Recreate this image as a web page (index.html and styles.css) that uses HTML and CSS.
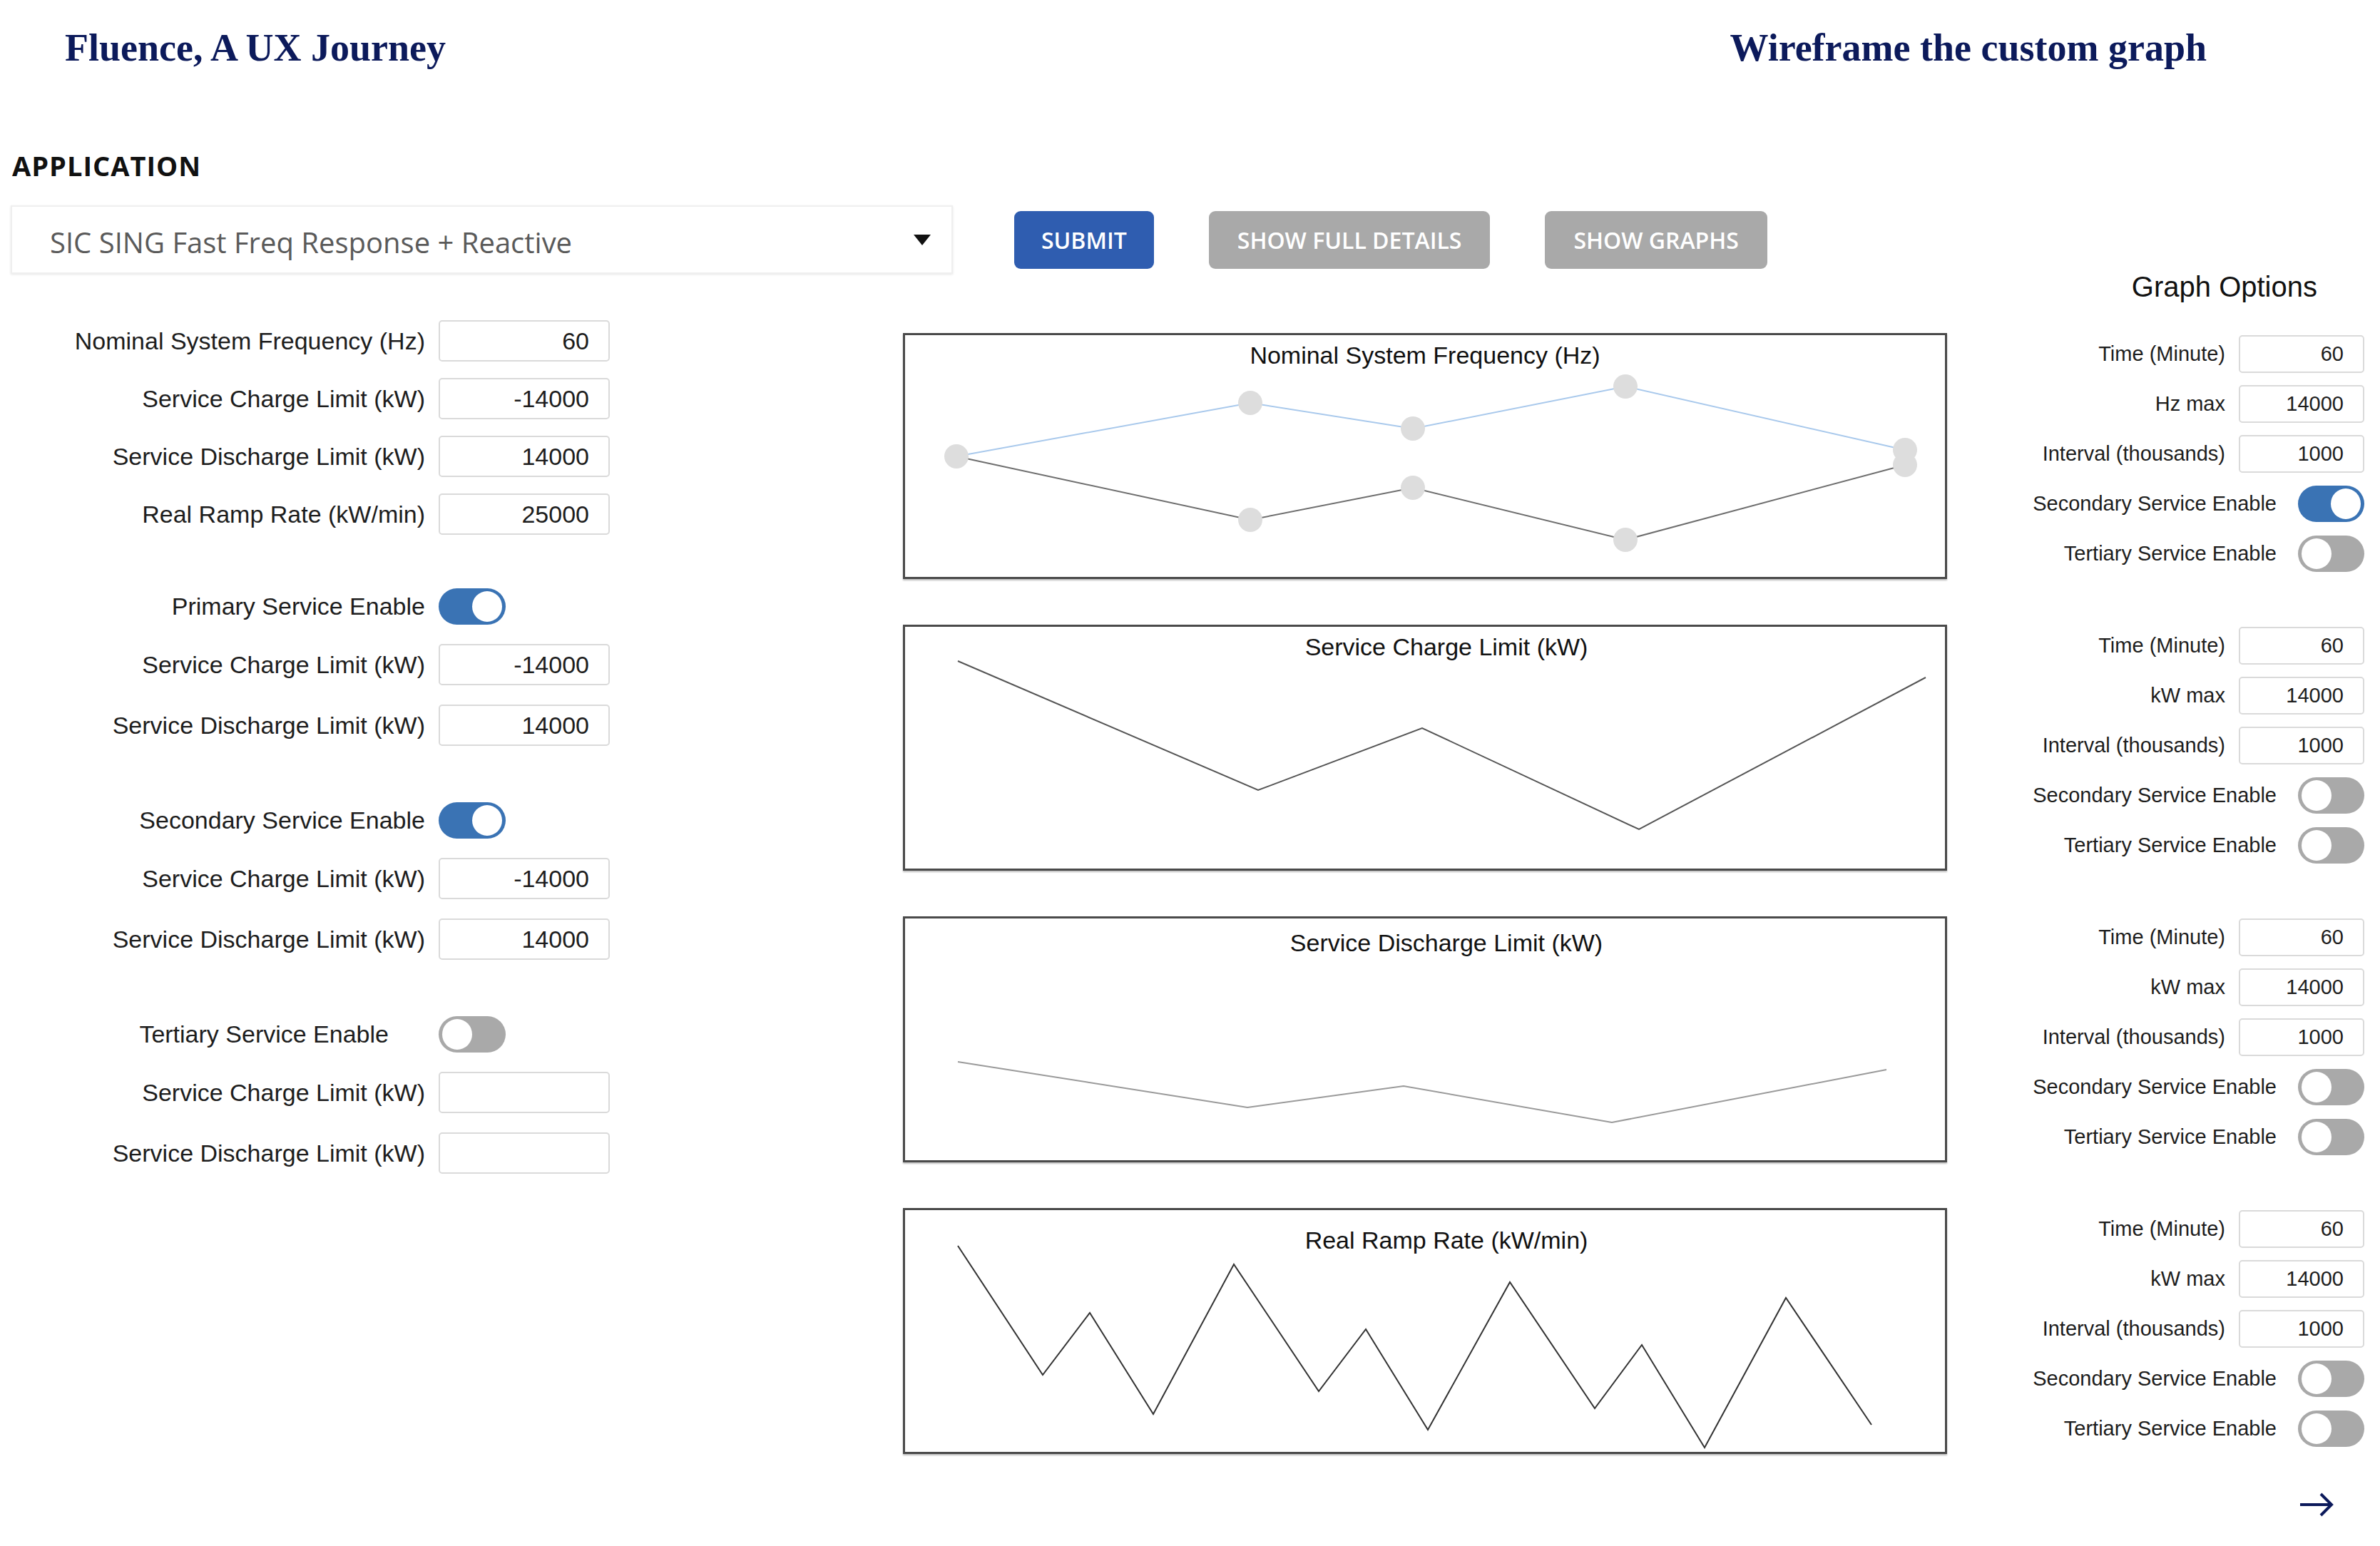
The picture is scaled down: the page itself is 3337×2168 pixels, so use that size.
FILE: index.html
```html
<!DOCTYPE html>
<html lang="en">
<head>
  <meta charset="UTF-8" />
  <meta name="viewport" content="width=device-width, initial-scale=1.0"/>
  <title>Fluence, A UX Journey</title>
  <link rel="stylesheet" href="styles.css">
</head>
<body>

  <!-- Cabeçalho do case -->
  <header class="top">
    <h1>Fluence, A UX Journey</h1>
    <h1>Wireframe the custom graph</h1>
  </header>

  <div class="page">
    <h2 class="section-title">APPLICATION</h2>

    <div class="toolbar">
      <div class="select">
        <span>SIC SING Fast Freq Response + Reactive</span>
        <span class="caret"></span>
      </div>
      <button class="btn btn-primary">SUBMIT</button>
      <button class="btn">SHOW FULL DETAILS</button>
      <button class="btn">SHOW GRAPHS</button>
    </div>

    <div class="content">

      <!-- Formulario da esquerda -->
      <div class="settings">
        <div class="form-group main">
          <label class="field"><span>Nominal System Frequency (Hz)</span><input class="input" value="60"></label>
          <label class="field"><span>Service Charge Limit (kW)</span><input class="input" value="-14000"></label>
          <label class="field"><span>Service Discharge Limit (kW)</span><input class="input" value="14000"></label>
          <label class="field"><span>Real Ramp Rate (kW/min)</span><input class="input" value="25000"></label>
        </div>

        <div class="form-group">
          <div class="field"><span>Primary Service Enable</span><span class="toggle"></span></div>
          <label class="field"><span>Service Charge Limit (kW)</span><input class="input" value="-14000"></label>
          <label class="field"><span>Service Discharge Limit (kW)</span><input class="input" value="14000"></label>
        </div>

        <div class="form-group">
          <div class="field"><span>Secondary Service Enable</span><span class="toggle"></span></div>
          <label class="field"><span>Service Charge Limit (kW)</span><input class="input" value="-14000"></label>
          <label class="field"><span>Service Discharge Limit (kW)</span><input class="input" value="14000"></label>
        </div>

        <div class="form-group">
          <div class="field"><span class="short">Tertiary Service Enable</span><span class="toggle off"></span></div>
          <label class="field"><span>Service Charge Limit (kW)</span><input class="input" value=""></label>
          <label class="field"><span>Service Discharge Limit (kW)</span><input class="input" value=""></label>
        </div>
      </div>

      <!-- Graficos + opcoes -->
      <section class="graphs">
        <h2 class="graphs-title">Graph Options</h2>

        <div class="graph-row">
          <div class="graph">
            <svg viewBox="0 0 1464 345">
              <polyline points="75,173 487,98 715,134 1013,75 1405,164" stroke="#a9c9ec" stroke-width="2" fill="none"/>
              <polyline points="75,173 487,262 715,217 1013,290 1405,185" stroke="#6e6e6e" stroke-width="2" fill="none"/>
              <g fill="#dddddd">
                <circle cx="75" cy="173" r="17"/>
                <circle cx="487" cy="98" r="17"/>
                <circle cx="715" cy="134" r="17"/>
                <circle cx="1013" cy="75" r="17"/>
                <circle cx="1405" cy="164" r="17"/>
                <circle cx="487" cy="262" r="17"/>
                <circle cx="715" cy="217" r="17"/>
                <circle cx="1013" cy="290" r="17"/>
                <circle cx="1405" cy="185" r="17"/>
              </g>
            </svg>
            <div class="graph-title">Nominal System Frequency (Hz)</div>
          </div>
          <div class="options">
            <label class="opt"><span>Time (Minute)</span><input class="input small" value="60"></label>
            <label class="opt"><span>Hz max</span><input class="input small" value="14000"></label>
            <label class="opt"><span>Interval (thousands)</span><input class="input small" value="1000"></label>
            <div class="opt switch"><span>Secondary Service Enable</span><span class="toggle"></span></div>
            <div class="opt switch"><span>Tertiary Service Enable</span><span class="toggle off"></span></div>
          </div>
        </div>

        <div class="graph-row">
          <div class="graph">
            <svg viewBox="0 0 1464 345">
              <polyline points="77,51 498,232 728,145 1032,287 1434,74" stroke="#555" stroke-width="2" fill="none"/>
            </svg>
            <div class="graph-title shifted">Service Charge Limit (kW)</div>
          </div>
          <div class="options">
            <label class="opt"><span>Time (Minute)</span><input class="input small" value="60"></label>
            <label class="opt"><span>kW max</span><input class="input small" value="14000"></label>
            <label class="opt"><span>Interval (thousands)</span><input class="input small" value="1000"></label>
            <div class="opt switch"><span>Secondary Service Enable</span><span class="toggle off"></span></div>
            <div class="opt switch"><span>Tertiary Service Enable</span><span class="toggle off"></span></div>
          </div>
        </div>

        <div class="graph-row">
          <div class="graph">
            <svg viewBox="0 0 1464 345">
              <polyline points="77,204 483,268 702,238 994,289 1379,215" stroke="#9a9a9a" stroke-width="2" fill="none"/>
            </svg>
            <div class="graph-title shifted lower">Service Discharge Limit (kW)</div>
          </div>
          <div class="options">
            <label class="opt"><span>Time (Minute)</span><input class="input small" value="60"></label>
            <label class="opt"><span>kW max</span><input class="input small" value="14000"></label>
            <label class="opt"><span>Interval (thousands)</span><input class="input small" value="1000"></label>
            <div class="opt switch"><span>Secondary Service Enable</span><span class="toggle off"></span></div>
            <div class="opt switch"><span>Tertiary Service Enable</span><span class="toggle off"></span></div>
          </div>
        </div>

        <div class="graph-row">
          <div class="graph">
            <svg viewBox="0 0 1464 345">
              <polyline points="77,53 196,234 262,147 351,289 464,79 583,257 649,170 736,311 851,104 970,281 1036,192 1124,336 1238,126 1358,304" stroke="#333" stroke-width="2" fill="none"/>
            </svg>
            <div class="graph-title shifted lowest">Real Ramp Rate (kW/min)</div>
          </div>
          <div class="options">
            <label class="opt"><span>Time (Minute)</span><input class="input small" value="60"></label>
            <label class="opt"><span>kW max</span><input class="input small" value="14000"></label>
            <label class="opt"><span>Interval (thousands)</span><input class="input small" value="1000"></label>
            <div class="opt switch"><span>Secondary Service Enable</span><span class="toggle off"></span></div>
            <div class="opt switch"><span>Tertiary Service Enable</span><span class="toggle off"></span></div>
          </div>
        </div>

        <div class="pager">
          <svg width="50" height="36" viewBox="0 0 50 36">
            <path d="M2 18 H46 M31 3 L46 18 L31 33" stroke="#0c1a5b" stroke-width="4" fill="none"/>
          </svg>
        </div>
      </section>
    </div>
  </div>

</body>
</html>
```

FILE: styles.css
```css
* {
  margin: 0;
  padding: 0;
  box-sizing: border-box;
}

body {
  background: #fff;
  overflow: hidden;
  font-family: 'Liberation Sans', Arial, sans-serif;
  color: #1d1d1d;
}

.top {
  display: flex;
  justify-content: space-between;
  padding: 37px 243px 0 91px;
}

.top h1 {
  font: bold 54px/61px 'Liberation Serif', serif;
  color: #0c1a5b;
}

.page {
  padding: 0 22px 0 15px;
}

.section-title {
  margin: 108px 0 0 2px;
  font: 700 38px/52px 'Open Sans', sans-serif;
  letter-spacing: 1px;
  color: #111;
}

.toolbar {
  margin-top: 30px;
  display: flex;
  align-items: center;
}

.select {
  width: 1321px;
  height: 96px;
  flex: none;
  display: flex;
  align-items: center;
  justify-content: space-between;
  padding: 6px 29px 0 53px;
  border: 2px solid #efefef;
  box-shadow: 0 1px 3px rgba(0,0,0,0.1);
  font: 40px 'Open Sans', sans-serif;
  color: #5a5a5a;
}

.caret {
  width: 0;
  height: 0;
  margin-top: -6px;
  border-left: 12px solid transparent;
  border-right: 12px solid transparent;
  border-top: 15px solid #111;
}

.btn {
  height: 81px;
  padding: 0 40px;
  margin-left: 77px;
  border: none;
  border-radius: 9px;
  background-color: #a9a9a9;
  color: white;
  font: 600 32px 'Open Sans', sans-serif;
}

.btn-primary {
  margin-left: 86px;
  padding: 0 38px;
  background-color: #2f5db0;
}

.content {
  display: flex;
  align-items: flex-start;
}

/* formulario */

.settings {
  width: 1251px;
  flex: none;
  padding-top: 65px;
}

.form-group {
  display: flex;
  flex-direction: column;
  gap: 27px;
  margin-bottom: 79px;
}

.form-group.main {
  gap: 23px;
  margin-bottom: 75px;
}

.field {
  display: grid;
  grid-template-columns: 581px 240px;
  column-gap: 19px;
  align-items: center;
  font-size: 34px;
}

.field > span:first-child {
  text-align: right;
}

.field .short {
  padding-right: 51px;
}

.input {
  width: 240px;
  height: 58px;
  border: 2px solid #dadada;
  border-radius: 5px;
  padding-right: 27px;
  text-align: right;
  font: 34px 'Liberation Sans', Arial, sans-serif;
  color: #1d1d1d;
  background: #fff;
}

.input.small {
  width: 176px;
  height: 53px;
  font-size: 29px;
}

.toggle {
  position: relative;
  display: block;
  width: 94px;
  height: 51px;
  border-radius: 26px;
  background: #3a73b4;
}

.toggle::after {
  content: '';
  position: absolute;
  top: 4px;
  right: 5px;
  width: 42px;
  height: 43px;
  border-radius: 50%;
  background: #fff;
}

.toggle.off {
  background: #a9a9a9;
}

.toggle.off::after {
  right: auto;
  left: 5px;
}

/* graficos */

.graphs {
  flex: 1;
}

.graphs-title {
  height: 83px;
  padding-right: 66px;
  text-align: right;
  font: 400 40px/36px 'Liberation Sans', Arial, sans-serif;
  color: #111;
}

.graph-row {
  display: flex;
  align-items: flex-start;
  margin-bottom: 64px;
}

.graph {
  position: relative;
  width: 1464px;
  height: 345px;
  flex: none;
  border: 3px solid #4a4a4a;
  box-shadow: 0 2px 2px rgba(0,0,0,0.25);
}

.graph svg {
  position: absolute;
  top: -3px;
  left: -3px;
  width: 1464px;
  height: 345px;
}

.graph-title {
  position: relative;
  padding-top: 8px;
  text-align: center;
  font-size: 34px;
  line-height: 40px;
  color: #111;
}

.graph-title.shifted {
  padding-left: 60px;
}

.graph-title.lower {
  padding-top: 14px;
}

.graph-title.lowest {
  padding-top: 22px;
}

.options {
  flex: 1;
  display: flex;
  flex-direction: column;
  gap: 17px;
  padding-top: 3px;
}

.opt {
  display: flex;
  justify-content: flex-end;
  align-items: center;
  gap: 19px;
  height: 53px;
  font-size: 29px;
}

.opt.switch {
  gap: 30px;
}

.opt .toggle {
  width: 93px;
}

.pager {
  display: flex;
  justify-content: flex-end;
  padding-right: 42px;
  margin-top: -11px;
}
```
